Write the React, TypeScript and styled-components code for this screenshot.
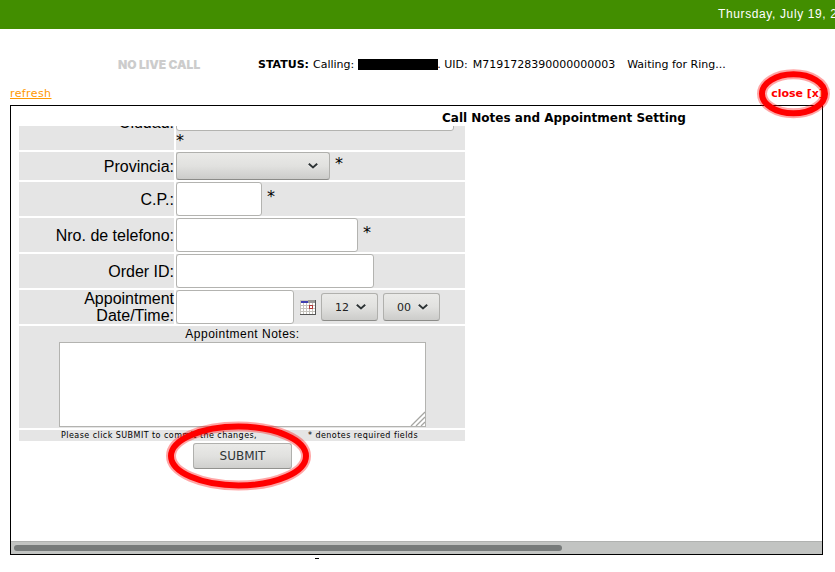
import React from "react";
import styled, { createGlobalStyle } from "styled-components";

const GlobalStyle = createGlobalStyle`
  * { box-sizing: border-box; }
  body { margin: 0; background: #fff; color: #000; overflow: hidden; }
`;

const sans = `"Liberation Sans", Arial, sans-serif`;
const deja = `"DejaVu Sans", Verdana, sans-serif`;

const Page = styled.div`
  position: relative;
  width: 835px;
  height: 572px;
  overflow: hidden;
  font-family: ${deja};
`;
const TopBar = styled.header`
  height: 29px;
  background: #428e00;
  color: #fff;
  padding-left: 718px;
  font: 12px/29px ${sans};
  letter-spacing: 0.62px;
  white-space: nowrap;
`;
const StatusRow = styled.div`
  display: flex;
  align-items: center;
  height: 70px;
  margin-bottom: -12px;
  padding-left: 118px;
  font-size: 11px;
  white-space: pre;
`;
const LiveCall = styled.span`
  width: 140px;
  font: 900 12px Inter, sans-serif;
  color: #ccc;
`;
const Status = styled.span<{ $gap?: number }>`
  margin-left: ${(p) => p.$gap ?? 0}px;
`;
const Redacted = styled.span`
  width: 80px;
  height: 11px;
  margin-left: 4px;
  background: #000;
`;
const LinkRow = styled.div`
  display: flex;
  justify-content: space-between;
  height: 18px;
  padding: 0 11px 0 10px;
  font-size: 11px;
  line-height: 14px;
`;
const Refresh = styled.a`
  color: #ff9900;
  text-decoration: underline;
  letter-spacing: 0.4px;
`;
const Close = styled.a`
  color: #f00;
  font-weight: bold;
`;
const Panel = styled.main`
  display: flex;
  flex-direction: column;
  width: 813px;
  height: 450px;
  margin-left: 10px;
  border: 1px solid #000;
`;
const Title = styled.h1`
  margin: 0;
  height: 20px;
  padding-left: 431px;
  font-size: 12px;
  line-height: 25px;
  white-space: nowrap;
`;
const Scroll = styled.div`
  flex: 1;
  overflow: hidden;
  padding-left: 8px;
`;
const Form = styled.form`
  display: flex;
  flex-direction: column;
  gap: 2px;
  width: 446px;
`;
const Row = styled.div<{ $h: number }>`
  display: grid;
  grid-template-columns: 155px 289px;
  gap: 2px;
  height: ${(p) => p.$h}px;
`;
const Label = styled.label`
  display: flex;
  align-items: center;
  justify-content: flex-end;
  background: #e5e5e5;
  font: 16px/17px ${sans};
  text-align: right;
`;
const Cell = styled.div`
  display: flex;
  align-items: center;
  background: #e5e5e5;
`;
const ClippedRow = styled(Row)`
  overflow: hidden;
  ${Label} {
    align-items: flex-start;
    line-height: 18px;
  }
  ${Label} span { margin-top: -12px; }
  ${Cell} {
    flex-direction: column;
    align-items: flex-start;
  }
`;
const Input = styled.input<{ $w: number }>`
  width: ${(p) => p.$w}px;
  height: 34px;
  border: 1px solid #b3b3b0;
  border-radius: 3px;
  background: #fff;
  outline: 0;
`;
const CityInput = styled(Input)`
  height: 34px;
  margin-top: -29px;
`;
const Star = styled.span<{ $x?: number }>`
  margin: -5px 0 0 ${(p) => p.$x ?? 5}px;
  font: 16px/18px ${deja};
`;
const CityStar = styled(Star)`
  margin: 1px 0 0;
`;
const Select = styled.div<{ $w: number; $gap?: number }>`
  display: flex;
  align-items: center;
  justify-content: flex-end;
  gap: 6px;
  width: ${(p) => p.$w}px;
  height: 28px;
  margin-left: ${(p) => p.$gap ?? 0}px;
  padding-right: 10px;
  border: 1px solid #b0b0ad;
  border-bottom-color: #8c8c89;
  border-radius: 3px;
  background: linear-gradient(#eaeae8, #e1e1df 50%, #ccccca);
  color: #222;
  font-size: 11px;
`;
const CalendarBox = styled.span`
  display: flex;
  margin-left: 6px;
`;
const Notes = styled.div`
  height: 102px;
  background: #e5e5e5;
  padding-left: 40px;
`;
const NotesTitle = styled.div`
  width: 367px;
  height: 16px;
  text-align: center;
  font: 12px/16px ${sans};
  letter-spacing: 0.5px;
`;
const NotesField = styled.div`
  display: flex;
  align-items: flex-end;
  justify-content: flex-end;
  width: 367px;
  height: 85px;
  border: 1px solid #b3b3b0;
  background: #fff;
`;
const Hint = styled.div`
  display: flex;
  height: 11px;
  padding-left: 42px;
  background: #e5e5e5;
  font-size: 8px;
  line-height: 11px;
  letter-spacing: 0.45px;
  white-space: nowrap;
`;
const HintPart = styled.span<{ $w: number }>`
  width: ${(p) => p.$w}px;
`;
const Submit = styled.button`
  width: 99px;
  height: 26px;
  margin-left: 174px;
  padding: 0;
  border: 1px solid #b0b0ad;
  border-bottom-color: #92928f;
  border-radius: 3px;
  background: linear-gradient(#eaeae8, #e1e1df 50%, #cfcfcd);
  color: #2e3436;
  font: 12px ${deja};
`;
const ScrollBar = styled.div`
  height: 13px;
  padding: 3px;
  border-top: 1px solid #b0b2b0;
  background: #c2c4c2;
`;
const Thumb = styled.div`
  width: 548px;
  height: 6px;
  border-radius: 3px;
  background: #777b7a;
`;
const Stray = styled.div`
  width: 4px;
  height: 1px;
  margin: 3px 0 0 315px;
  background: #000;
`;
const Overlay = styled.svg`
  position: absolute;
  inset: 0;
  pointer-events: none;
`;

const Chevron = () => (
  <svg width="12" height="8" viewBox="0 0 12 8">
    <path d="M1.8 2.7L6 6.3L10.2 2.7" fill="none" stroke="#fff" strokeWidth="1.8" opacity=".6" />
    <path d="M1.8 1.8L6 5.4L10.2 1.8" fill="none" stroke="#2e3436" strokeWidth="2" />
  </svg>
);

const Calendar = () => (
  <svg width="16" height="15" shapeRendering="crispEdges">
    <rect width="16" height="15" fill="#555" />
    <rect width="15" height="14" fill="#c6c3bd" />
    <rect x="1" y="1" width="7" height="2" fill="#3f3fb0" />
    <rect x="8" y="0" width="7" height="3" fill="#999" />
    {[0, 1, 2, 3].flatMap((r) =>
      [0, 1, 2, 3, 4].map((c) => (
        <rect key={`${r}-${c}`} x={1 + c * 3} y={3 + r * 3} width="2" height="2" fill="#fff" />
      )),
    )}
    <rect x="9.5" y="5.5" width="3" height="3" fill="#fff" stroke="#b03a3a" />
  </svg>
);

const Grip = () => (
  <svg width="15" height="15">
    <path d="M1 15L15 1M6 15L15 6M11 15L15 11" stroke="#a5a5a2" strokeWidth="1.3" />
  </svg>
);

export default function App() {
  return (
    <Page>
      <GlobalStyle />
      <TopBar>Thursday, July 19, 2</TopBar>
      <StatusRow>
        <LiveCall>NO LIVE CALL</LiveCall>
        <b>STATUS:</b>
        <Status $gap={4}>Calling:</Status>
        <Redacted />
        <Status $gap={-1}>. UID:</Status>
        <Status $gap={5}>M7191728390000000003</Status>
        <Status $gap={12}>Waiting for Ring...</Status>
      </StatusRow>
      <LinkRow>
        <Refresh>refresh</Refresh>
        <Close>close [x]</Close>
      </LinkRow>
      <Panel>
        <Title>Call Notes and Appointment Setting</Title>
        <Scroll>
          <Form>
            <ClippedRow $h={24}>
              <Label><span>Ciudad:</span></Label>
              <Cell>
                <CityInput $w={278} />
                <CityStar>*</CityStar>
              </Cell>
            </ClippedRow>
            <Row $h={28}>
              <Label>Provincia:</Label>
              <Cell>
                <Select $w={154}><Chevron /></Select>
                <Star>*</Star>
              </Cell>
            </Row>
            <Row $h={34}>
              <Label>C.P.:</Label>
              <Cell><Input $w={86} /><Star>*</Star></Cell>
            </Row>
            <Row $h={34}>
              <Label>Nro. de telefono:</Label>
              <Cell><Input $w={182} /><Star>*</Star></Cell>
            </Row>
            <Row $h={34}>
              <Label>Order ID:</Label>
              <Cell><Input $w={198} /></Cell>
            </Row>
            <Row $h={34}>
              <Label>Appointment<br />Date/Time:</Label>
              <Cell>
                <Input $w={118} />
                <CalendarBox><Calendar /></CalendarBox>
                <Select $w={57} $gap={5}>12<Chevron /></Select>
                <Select $w={57} $gap={5}>00<Chevron /></Select>
              </Cell>
            </Row>
            <Notes>
              <NotesTitle>Appointment Notes:</NotesTitle>
              <NotesField><Grip /></NotesField>
            </Notes>
            <Hint>
              <HintPart $w={247}>Please click SUBMIT to commit the changes,</HintPart>
              <HintPart $w={130}>* denotes required fields</HintPart>
            </Hint>
            <Submit type="button">SUBMIT</Submit>
          </Form>
        </Scroll>
        <ScrollBar><Thumb /></ScrollBar>
      </Panel>
      <Stray />
      <Overlay width="835" height="572">
        <g fill="none" stroke="#f00">
          <g strokeWidth="10" opacity=".35">
            <ellipse cx="238.5" cy="456" rx="67.5" ry="29.5" />
            <ellipse cx="793.5" cy="93.8" rx="31.5" ry="19.5" />
          </g>
          <g strokeWidth="6">
            <ellipse cx="238.5" cy="456" rx="67.5" ry="29.5" />
            <ellipse cx="793.5" cy="93.8" rx="31.5" ry="19.5" />
          </g>
        </g>
      </Overlay>
    </Page>
  );
}
